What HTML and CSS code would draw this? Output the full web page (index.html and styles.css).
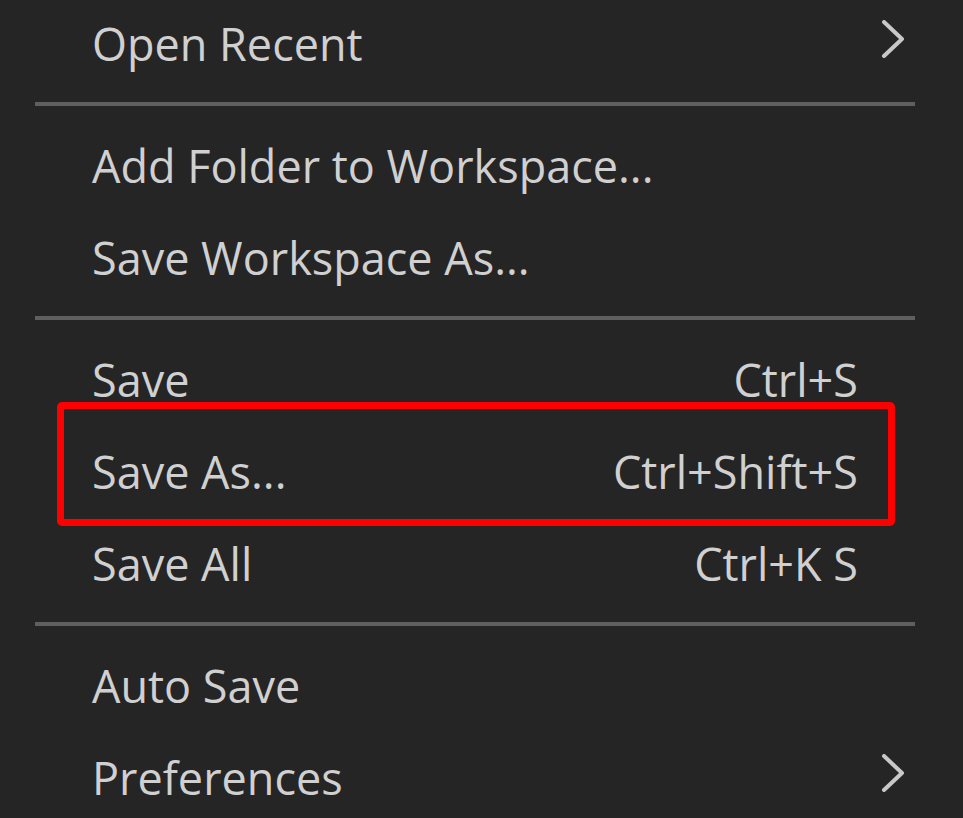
FILE: index.html
```html
<!DOCTYPE html>
<html lang="en">
<head>
  <meta charset="UTF-8" />
  <title>File Menu</title>
  <link rel="stylesheet" href="styles.css">
</head>
<body>
  <div class="menu">
    <div class="item">
      <span class="label">Open Recent</span>
      <span class="sub"><svg width="24" height="38" viewBox="0 0 24 38"><path d="M3 2 L21 19 L3 36" fill="none" stroke="#c8c8c8" stroke-width="4" stroke-linecap="round" stroke-linejoin="round"/></svg></span>
    </div>
    <div class="sep"></div>
    <div class="item"><span class="label">Add Folder to Workspace...</span></div>
    <div class="item"><span class="label">Save Workspace As...</span></div>
    <div class="sep"></div>
    <div class="item"><span class="label">Save</span><span class="keys">Ctrl+S</span><span class="sub"></span></div>
    <div class="item marked"><span class="label">Save As...</span><span class="keys">Ctrl+Shift+S</span><span class="sub"></span></div>
    <div class="item"><span class="label">Save All</span><span class="keys">Ctrl+K S</span><span class="sub"></span></div>
    <div class="sep"></div>
    <div class="item"><span class="label">Auto Save</span></div>
    <div class="item">
      <span class="label">Preferences</span>
      <span class="sub"><svg width="24" height="38" viewBox="0 0 24 38"><path d="M3 2 L21 19 L3 36" fill="none" stroke="#c8c8c8" stroke-width="4" stroke-linecap="round" stroke-linejoin="round"/></svg></span>
    </div>
  </div>
</body>
</html>
```

FILE: styles.css
```css
html, body {
  margin: 0;
  height: 100%;
  background: #252526;
  overflow: hidden;
}
.menu {
  margin: -3px 0 0 35px;
  width: 880px;
  font-family: 'Open Sans', 'Noto Sans', sans-serif;
  font-size: 45px;
  color: #d0d0d0;
}
.item {
  position: relative;
  display: flex;
  align-items: center;
  height: 92px;
  padding: 0 10px 0 57px;
}
.label {
  flex: 1;
  white-space: nowrap;
}
.keys {
  white-space: nowrap;
}
.sub {
  width: 47px;
  display: flex;
  justify-content: flex-end;
  align-items: center;
}
.sub svg {
  margin-top: -8px;
}
.sep {
  height: 30px;
  display: flex;
  align-items: center;
}
.sep::before {
  content: "";
  flex: 1;
  height: 4px;
  background: #5f5f60;
}
.marked::after {
  content: "";
  position: absolute;
  top: -23px;
  bottom: -9px;
  left: 22px;
  right: 20px;
  border: 7px solid #ff0000;
  border-radius: 5px;
}
```
